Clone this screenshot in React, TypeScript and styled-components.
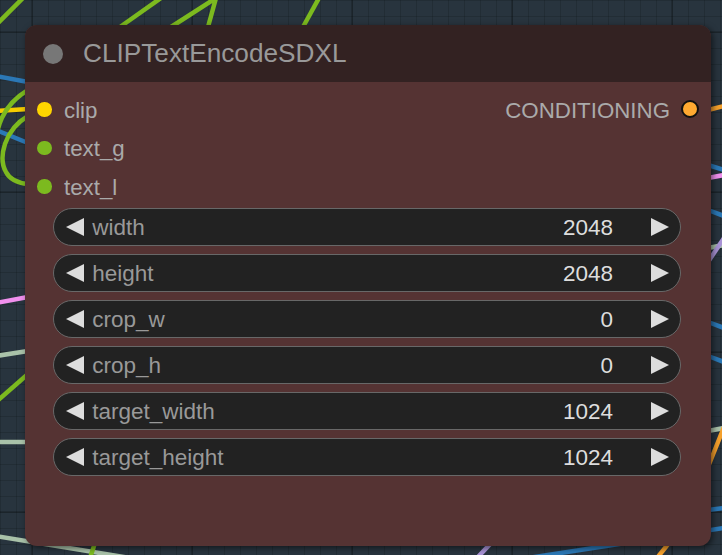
import * as React from 'react';
import styled, { createGlobalStyle } from 'styled-components';

const GlobalStyle = createGlobalStyle`
  html, body {
    margin: 0;
    padding: 0;
    background: #27333d;
  }
  body {
    font-family: 'Liberation Sans', Arial, sans-serif;
  }
`;

// canvas with the litegraph style grid
const Canvas = styled.div`
  position: relative;
  width: 722px;
  height: 555px;
  overflow: hidden;
  box-sizing: border-box;
  padding: 25px 11px 9px 25px;
  background-color: #28343e;
  background-image:
    linear-gradient(to right, rgba(0, 0, 0, 0.2) 2px, transparent 2px),
    linear-gradient(to bottom, rgba(0, 0, 0, 0.2) 2px, transparent 2px),
    linear-gradient(to right, rgba(0, 0, 0, 0.14) 1px, transparent 1px),
    linear-gradient(to bottom, rgba(0, 0, 0, 0.14) 1px, transparent 1px);
  background-size: 160px 160px, 160px 160px, 16px 16px, 16px 16px;
  background-position: 31px 31px, 31px 31px, 0 0, 0 0;
`;

const Wires = styled.svg`
  position: absolute;
  inset: 0;
  width: 722px;
  height: 555px;
  pointer-events: none;
`;

const Node = styled.div`
  position: relative;
  width: 686px;
  height: 521px;
  border-radius: 12px;
  background: #553333;
  box-shadow: 2px 2px 6px rgba(0, 0, 0, 0.55);
  display: flex;
  flex-direction: column;
  overflow: hidden;
`;

const TitleBar = styled.div`
  height: 57px;
  flex-shrink: 0;
  background: #332222;
  display: flex;
  align-items: center;
  padding-left: 18px;
  gap: 20px;
`;

const TitleDot = styled.span`
  width: 20px;
  height: 20px;
  border-radius: 50%;
  background: #777;
`;

const Title = styled.span`
  color: #999;
  font-size: 26.2px;
  line-height: 1;
`;

const Body = styled.div`
  display: flex;
  flex-direction: column;
  padding-top: 8px;
`;

const SlotRow = styled.div`
  height: 38.6px;
  display: flex;
  align-items: center;
  justify-content: space-between;
  padding: 0 12px;
`;

const Slot = styled.div<{ $right?: boolean }>`
  display: flex;
  align-items: center;
  flex-direction: ${(p) => (p.$right ? 'row-reverse' : 'row')};
  gap: ${(p) => (p.$right ? '11px' : '12.5px')};
`;

const SlotDot = styled.span<{ $color: string; $outlined?: boolean }>`
  width: ${(p) => (p.$outlined ? '14px' : '14.5px')};
  height: ${(p) => (p.$outlined ? '14px' : '14.5px')};
  border-radius: 50%;
  background: ${(p) => p.$color};
  border: ${(p) => (p.$outlined ? '2px solid #111' : 'none')};
  flex-shrink: 0;
`;

const SlotLabel = styled.span`
  color: #aaa;
  font-size: 22.3px;
  line-height: 1;
  padding-top: 3px;
`;

const Widgets = styled.div`
  display: flex;
  flex-direction: column;
  gap: 7.6px;
  padding: 2px 30px 0 28px;
`;

const Widget = styled.div`
  height: 38.4px;
  box-sizing: border-box;
  border: 1.5px solid #686868;
  border-radius: 20px;
  background: #222;
  display: flex;
  align-items: center;
  padding: 0 11.5px;
`;

const Arrow = styled.svg`
  width: 18px;
  height: 18px;
  flex-shrink: 0;
  fill: #ddd;
`;

const WidgetLabel = styled.span`
  flex: 1;
  margin-left: 8.7px;
  color: #999;
  font-size: 22.5px;
  line-height: 1;
  padding-top: 2px;
`;

const WidgetValue = styled.span`
  margin-right: 37.5px;
  color: #ddd;
  font-size: 22.5px;
  line-height: 1;
  padding-top: 2px;
`;

const inputs = [
  { name: 'clip', color: '#ffd500' },
  { name: 'text_g', color: '#7cba1f' },
  { name: 'text_l', color: '#7cba1f' },
];

const widgets = [
  { name: 'width', value: 2048 },
  { name: 'height', value: 2048 },
  { name: 'crop_w', value: 0 },
  { name: 'crop_h', value: 0 },
  { name: 'target_width', value: 1024 },
  { name: 'target_height', value: 1024 },
];

const wires = [
  // top
  { d: 'M -4 25 L 23 -2', c: '#7cba1f' },
  { d: 'M 120 27 L 161 -2', c: '#7cba1f' },
  { d: 'M 171 27 L 216 -2 L 208 27', c: '#7cba1f' },
  { d: 'M 303 27 L 319 -2', c: '#7cba1f' },
  // left
  { d: 'M -4 76 L 28 82', c: '#2b78b6' },
  { d: 'M -4 130 L 28 143', c: '#2b78b6' },
  { d: 'M -4 111 L 28 109', c: '#f5cc00' },
  { d: 'M 28 90 C 8 102, -2 120, -4 140', c: '#7cba1f' },
  { d: 'M 28 116 C 4 130, -2 158, 6 172 C 10 180, 18 183, 28 184', c: '#7cba1f' },
  { d: 'M -4 303 L 28 297', c: '#f090ee' },
  { d: 'M -4 356 L 28 351', c: '#a9c2a9' },
  { d: 'M -4 402 L 28 374', c: '#7cba1f' },
  { d: 'M -4 442 L 28 442', c: '#a9c2a9' },
  // bottom
  { d: 'M -4 536 L 130 558', c: '#a9c2a9' },
  { d: 'M 90 558 L 95 543', c: '#7cba1f' },
  { d: 'M 477 558 L 493 541', c: '#a993d6' },
  { d: 'M 528 558 L 724 528', c: '#2b78b6' },
  { d: 'M 657 558 L 673 538', c: '#f5a02c' },
  // right
  { d: 'M 708 110 L 724 106', c: '#f5a02c' },
  { d: 'M 708 165 L 724 170', c: '#2b78b6' },
  { d: 'M 708 178 L 724 175', c: '#f090ee' },
  { d: 'M 708 210 L 724 216', c: '#2b78b6' },
  { d: 'M 708 248 L 724 245', c: '#a9c2a9' },
  { d: 'M 708 262 L 724 238', c: '#a993d6' },
  { d: 'M 708 322 L 724 328', c: '#2b78b6' },
  { d: 'M 708 356 L 724 362', c: '#2b78b6' },
  { d: 'M 708 431 L 724 428', c: '#a9c2a9' },
  { d: 'M 706 472 L 726 422', c: '#f5a02c' },
  { d: 'M 708 510 L 724 508', c: '#2b78b6' },
];

export default function App() {
  return (
    <>
      <GlobalStyle />
      <Canvas>
        <Wires viewBox="0 0 722 555">
          {wires.map((w, i) => (
            <path
              key={i}
              d={w.d}
              stroke={w.c}
              strokeWidth={4.5}
              fill="none"
              strokeLinecap="butt"
            />
          ))}
        </Wires>

        <Node>
          <TitleBar>
            <TitleDot />
            <Title>CLIPTextEncodeSDXL</Title>
          </TitleBar>

          <Body>
            {inputs.map((input, i) => (
              <SlotRow key={input.name}>
                <Slot>
                  <SlotDot $color={input.color} />
                  <SlotLabel>{input.name}</SlotLabel>
                </Slot>
                {i === 0 && (
                  <Slot $right>
                    <SlotDot $color="#ffa931" $outlined />
                    <SlotLabel>CONDITIONING</SlotLabel>
                  </Slot>
                )}
              </SlotRow>
            ))}

            <Widgets>
              {widgets.map((w) => (
                <Widget key={w.name}>
                  <Arrow viewBox="0 0 18 18">
                    <polygon points="18,0 18,18 0,9" />
                  </Arrow>
                  <WidgetLabel>{w.name}</WidgetLabel>
                  <WidgetValue>{w.value}</WidgetValue>
                  <Arrow viewBox="0 0 18 18">
                    <polygon points="0,0 18,9 0,18" />
                  </Arrow>
                </Widget>
              ))}
            </Widgets>
          </Body>
        </Node>
      </Canvas>
    </>
  );
}
